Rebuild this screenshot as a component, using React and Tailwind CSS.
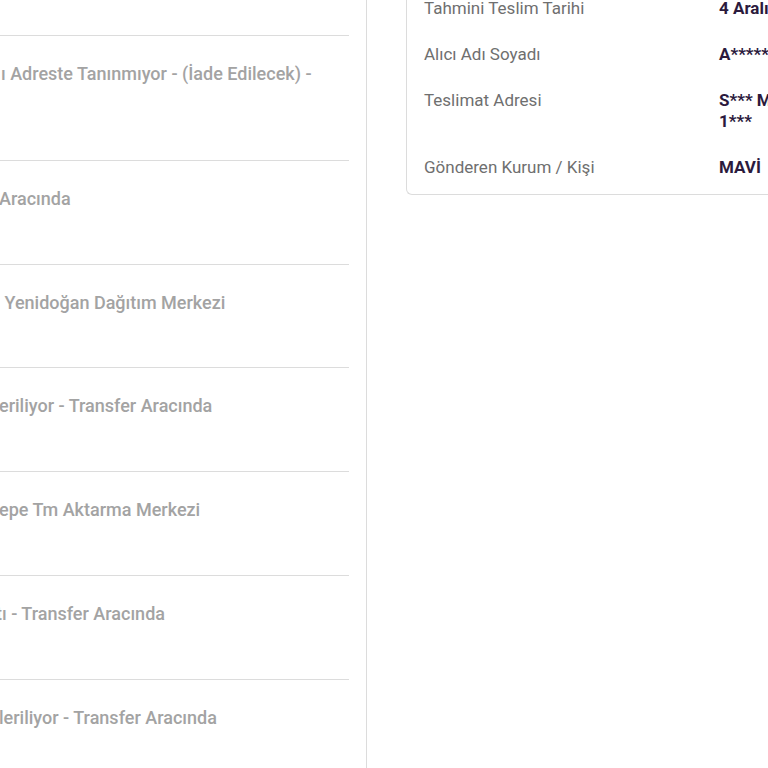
import React from 'react';

const steps = [
    { text: 'ı Adreste Tanınmıyor - (İade Edilecek) -', shift: 'ml-[1px]', lines: 2 },
    { text: 'Aracında', shift: '-ml-[1px]', lines: 1 },
    { text: ' Yenidoğan Dağıtım Merkezi', shift: 'ml-[0px]', lines: 1 },
    { text: 'eriliyor - Transfer Aracında', shift: '-ml-[1px]', lines: 1 },
    { text: 'epe Tm Aktarma Merkezi', shift: '-ml-[1px]', lines: 1 },
    { text: 'tı - Transfer Aracında', shift: '-ml-[4px]', lines: 1 },
    { text: 'leriliyor - Transfer Aracında', shift: '-ml-[1px]', lines: 1 },
];

const details = [
    { label: 'Tahmini Teslim Tarihi', value: ['4 Aralık 2024 Çarşamba'] },
    { label: 'Alıcı Adı Soyadı', value: ['A***** K*****'] },
    { label: 'Teslimat Adresi', value: ['S*** M*** Mah. K*** Sk. No:', '1***'] },
    { label: 'Gönderen Kurum / Kişi', value: ['MAVİ'] },
];

function StepRow({ text, shift, lines }) {
    return (
        <div className="border-b border-[#dcdcdc] pt-[27px] pb-[54.75px] overflow-hidden">
            <div className={`whitespace-pre text-[18px] leading-[21px] font-medium text-[#a3a3a3] ${shift} ${lines === 2 ? 'h-[42px]' : 'h-[21px]'}`}>
                {text}
            </div>
        </div>
    );
}

export default function App() {
    return (
        <div className="flex h-screen w-full overflow-hidden bg-white" style={{ fontFamily: 'Roboto, "Noto Sans", sans-serif' }}>
            {/* Movement history column */}
            <div className="w-[367px] shrink-0 border-r border-[#dcdcdc] pr-[17px]">
                <div className="h-[36px] border-b border-[#dcdcdc]" />
                {steps.map((s, i) => (
                    <StepRow key={i} {...s} />
                ))}
            </div>

            {/* Shipment details card */}
            <div className="ml-[39px] flex-1 min-w-0">
                <div className="-mt-[27px] border-l border-b border-[#dcdcdc] rounded-bl-[6px] pl-[17px] pt-[25px] pb-[16px]">
                    <div className="grid grid-cols-[295px_1fr] gap-y-[25px] text-[17px] leading-[21px]">
                        {details.map((d) => (
                            <React.Fragment key={d.label}>
                                <div className="text-[#6f6f6f] whitespace-nowrap">{d.label}</div>
                                <div className="font-bold text-[#2b1a3d] whitespace-nowrap">
                                    {d.value.map((line, i) => (
                                        <div key={i}>{line}</div>
                                    ))}
                                </div>
                            </React.Fragment>
                        ))}
                    </div>
                </div>
            </div>
        </div>
    );
}
